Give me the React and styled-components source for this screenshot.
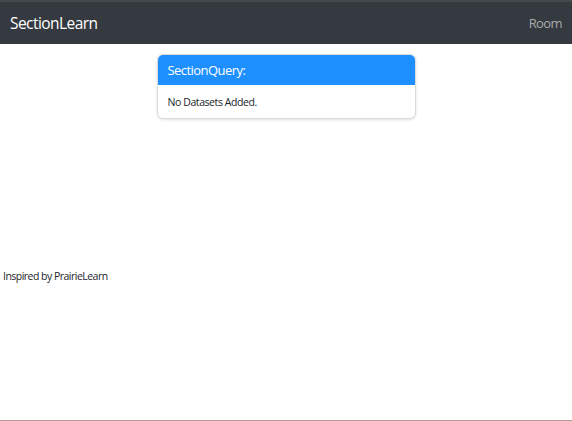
import React from "react";
import styled, { createGlobalStyle } from "styled-components";

const Global = createGlobalStyle`
  html, body { margin: 0; padding: 0; background: #fff; }
  body { font-family: "Open Sans", "Noto Sans", sans-serif; color: #212529; }
  #root { min-height: 421px; }
`;

const Page = styled.div`
  height: 421px;
  display: flex;
  flex-direction: column;
  box-sizing: border-box;
  border-bottom: 1px solid #b99a9a;
`;

const Navbar = styled.nav`
  height: 44px;
  box-sizing: border-box;
  background: #343a40;
  border-top: 2px solid #474a4d;
  display: flex;
  align-items: center;
  justify-content: space-between;
  padding: 0 10px 0 10px;
`;

const Brand = styled.span`
  color: #fff;
  font-size: 15.5px;
  letter-spacing: -0.55px;
`;

const NavLink = styled.span`
  color: #a8aaac;
  font-size: 13px;
  letter-spacing: -0.6px;
`;

const Main = styled.main`
  display: flex;
  justify-content: center;
  padding-top: 10px;
`;

const Card = styled.section`
  width: 257px;
  border: 1px solid #dcdcdc;
  border-radius: 6px;
  overflow: hidden;
  box-shadow: 0 1px 3px rgba(0, 0, 0, 0.12);
  background: #fff;
`;

const CardHeader = styled.header`
  height: 30px;
  background: #1e8fff;
  color: #fff;
  font-size: 13px;
  letter-spacing: -0.55px;
  display: flex;
  align-items: center;
  padding: 0 10px;
`;

const CardBody = styled.div`
  height: 33px;
  display: flex;
  align-items: center;
  padding: 0 10px;
  font-size: 10.5px;
  letter-spacing: -0.42px;
  color: #212529;
`;

const Footer = styled.footer`
  margin-top: 150px;
  padding-left: 3px;
  font-size: 10.5px;
  letter-spacing: -0.52px;
  color: #212529;
`;

export default function App() {
  return (
    <>
      <Global />
      <Page>
        <Navbar>
          <Brand>SectionLearn</Brand>
          <NavLink>Room</NavLink>
        </Navbar>
        <Main>
          <Card>
            <CardHeader>SectionQuery:</CardHeader>
            <CardBody>No Datasets Added.</CardBody>
          </Card>
        </Main>
        <Footer>Inspired by PrairieLearn</Footer>
      </Page>
    </>
  );
}
